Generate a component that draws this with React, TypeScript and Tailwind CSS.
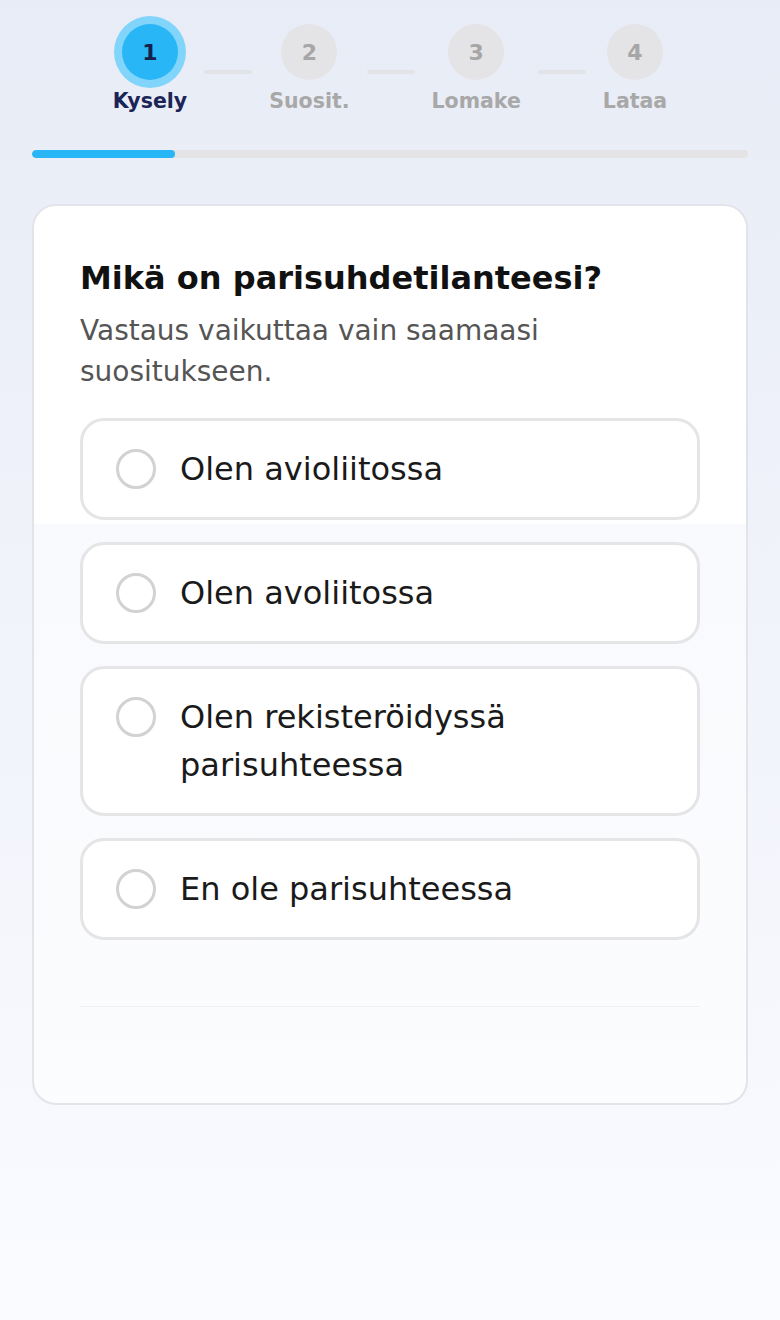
import React from "react"

const steps = [
  { n: 1, label: "Kysely" },
  { n: 2, label: "Suosit." },
  { n: 3, label: "Lomake" },
  { n: 4, label: "Lataa" },
]

const options = [
  "Olen avioliitossa",
  "Olen avoliitossa",
  "Olen rekisteröidyssä parisuhteessa",
  "En ole parisuhteessa",
]

function Stepper({ current }: { current: number }) {
  return (
    <div className="flex items-start justify-center gap-[17px]">
      {steps.map((s, i) => {
        const active = s.n === current
        return (
          <React.Fragment key={s.n}>
            {i > 0 && <div className="mt-[46px] h-1 w-12 rounded-full bg-[#e2e3e7]" />}
            <div className="flex flex-col items-center">
              <div
                className={
                  active
                    ? "flex h-14 w-14 items-center justify-center rounded-full bg-[#29b6f6] text-[22px] font-bold text-[#15204d] shadow-[0_0_0_8px_#81d4fa]"
                    : "flex h-14 w-14 items-center justify-center rounded-full bg-[#e4e4e6] text-[22px] font-bold text-[#a6a6a6]"
                }
              >
                {s.n}
              </div>
              <div
                className={
                  active
                    ? "mt-2 text-[20.5px] font-bold leading-[26px] text-[#1a2556]"
                    : "mt-2 text-[20.5px] font-bold leading-[26px] text-[#a8a8a8]"
                }
              >
                {s.label}
              </div>
            </div>
          </React.Fragment>
        )
      })}
    </div>
  )
}

export default function App() {
  return (
    <div
      className="min-h-screen bg-gradient-to-b from-[#e8ecf6] to-[#fafbff] px-8 pt-6 pb-10"
      style={{ fontFamily: '"DejaVu Sans", "Noto Sans", sans-serif' }}
    >
      <Stepper current={1} />

      <div className="mt-9 h-2 w-full overflow-hidden rounded-full bg-[#e4e4e6]">
        <div className="h-full w-1/5 rounded-full bg-[#29b6f6]" />
      </div>

      <div className="mt-[46px] rounded-3xl border-2 border-[#e3e4e9] bg-[linear-gradient(#ffffff_318px,#ffffff99_318px)] px-[46px] pt-[52px] pb-12">
        <h1 className="text-[32px] font-bold leading-[40px] text-[#111111]">Mikä on parisuhdetilanteesi?</h1>
        <p className="mt-3 text-[28px] leading-[41px] text-[#555555]">Vastaus vaikuttaa vain saamaasi suositukseen.</p>

        <div className="mt-[26px] flex flex-col gap-[22px]">
          {options.map((o) => (
            <button
              key={o}
              type="button"
              className="flex items-start gap-6 rounded-3xl border-[3px] border-[#e5e5e7] bg-white px-[33px] py-6 text-left"
            >
              <span className="mt-1 h-10 w-10 shrink-0 rounded-full border-[3px] border-[#d2d2d4]" />
              <span className="text-[32px] leading-[48px] text-[#1a1a1a]">{o}</span>
            </button>
          ))}
        </div>

        <div className="mt-[66px] border-t border-[#eef0f5]" />
        <div className="h-12" />
      </div>
    </div>
  )
}
